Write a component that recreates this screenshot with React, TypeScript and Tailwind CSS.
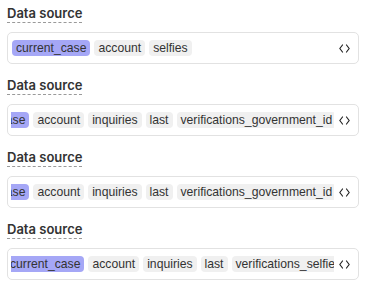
import React from "react";

const Code = () => (
  <svg width="11" height="9" viewBox="0 0 11 9" fill="none" stroke="#222" strokeWidth="1.2" strokeLinecap="round" strokeLinejoin="round">
    <path d="M3.5 1 L0.8 4.5 L3.5 8" />
    <path d="M7.5 1 L10.2 4.5 L7.5 8" />
  </svg>
);

type Row = { chips: string[]; shift: string };

const rows: Row[] = [
  { chips: ["current_case", "account", "selfies"], shift: "ml-[1px]" },
  { chips: ["current_case", "account", "inquiries", "last", "verifications_government_id"], shift: "ml-[-60px]" },
  { chips: ["current_case", "account", "inquiries", "last", "verifications_government_id"], shift: "ml-[-60px]" },
  { chips: ["current_case", "account", "inquiries", "last", "verifications_selfie"], shift: "ml-[-5px]" },
];

export default function App() {
  return (
    <div className="w-[365px] h-[287px] bg-white pl-[7px] pr-[6px]" style={{ fontFamily: '"Liberation Sans", Arial, sans-serif' }}>
      {rows.map((r, i) => (
        <div key={i} className="pt-1 pb-2">
          <div className="h-5 flex items-center">
            <span className="text-[13px] font-semibold leading-[17px] text-[#333] border-b border-dashed border-[#9a9a9a]" style={{ fontFamily: 'Inter, sans-serif' }}>
              Data source
            </span>
          </div>
          <div className="mt-2 h-8 border border-[#e2e2e2] rounded-[5px] flex items-center pl-[3px]">
            <div className="flex-1 min-w-0 overflow-hidden">
              <div className={`flex gap-1 ${r.shift}`}>
                {r.chips.map((c, j) => (
                  <span
                    key={j}
                    className={`shrink-0 h-4 px-1 rounded-[4px] text-[12.2px] leading-4 text-[#333] whitespace-nowrap ${j === 0 ? "bg-[#a5a7f6]" : "bg-[#f0f0f0]"}`}
                  >
                    {c}
                  </span>
                ))}
              </div>
            </div>
            <div className="ml-[5px] mr-[8px] flex items-center">
              <Code />
            </div>
          </div>
        </div>
      ))}
    </div>
  );
}
